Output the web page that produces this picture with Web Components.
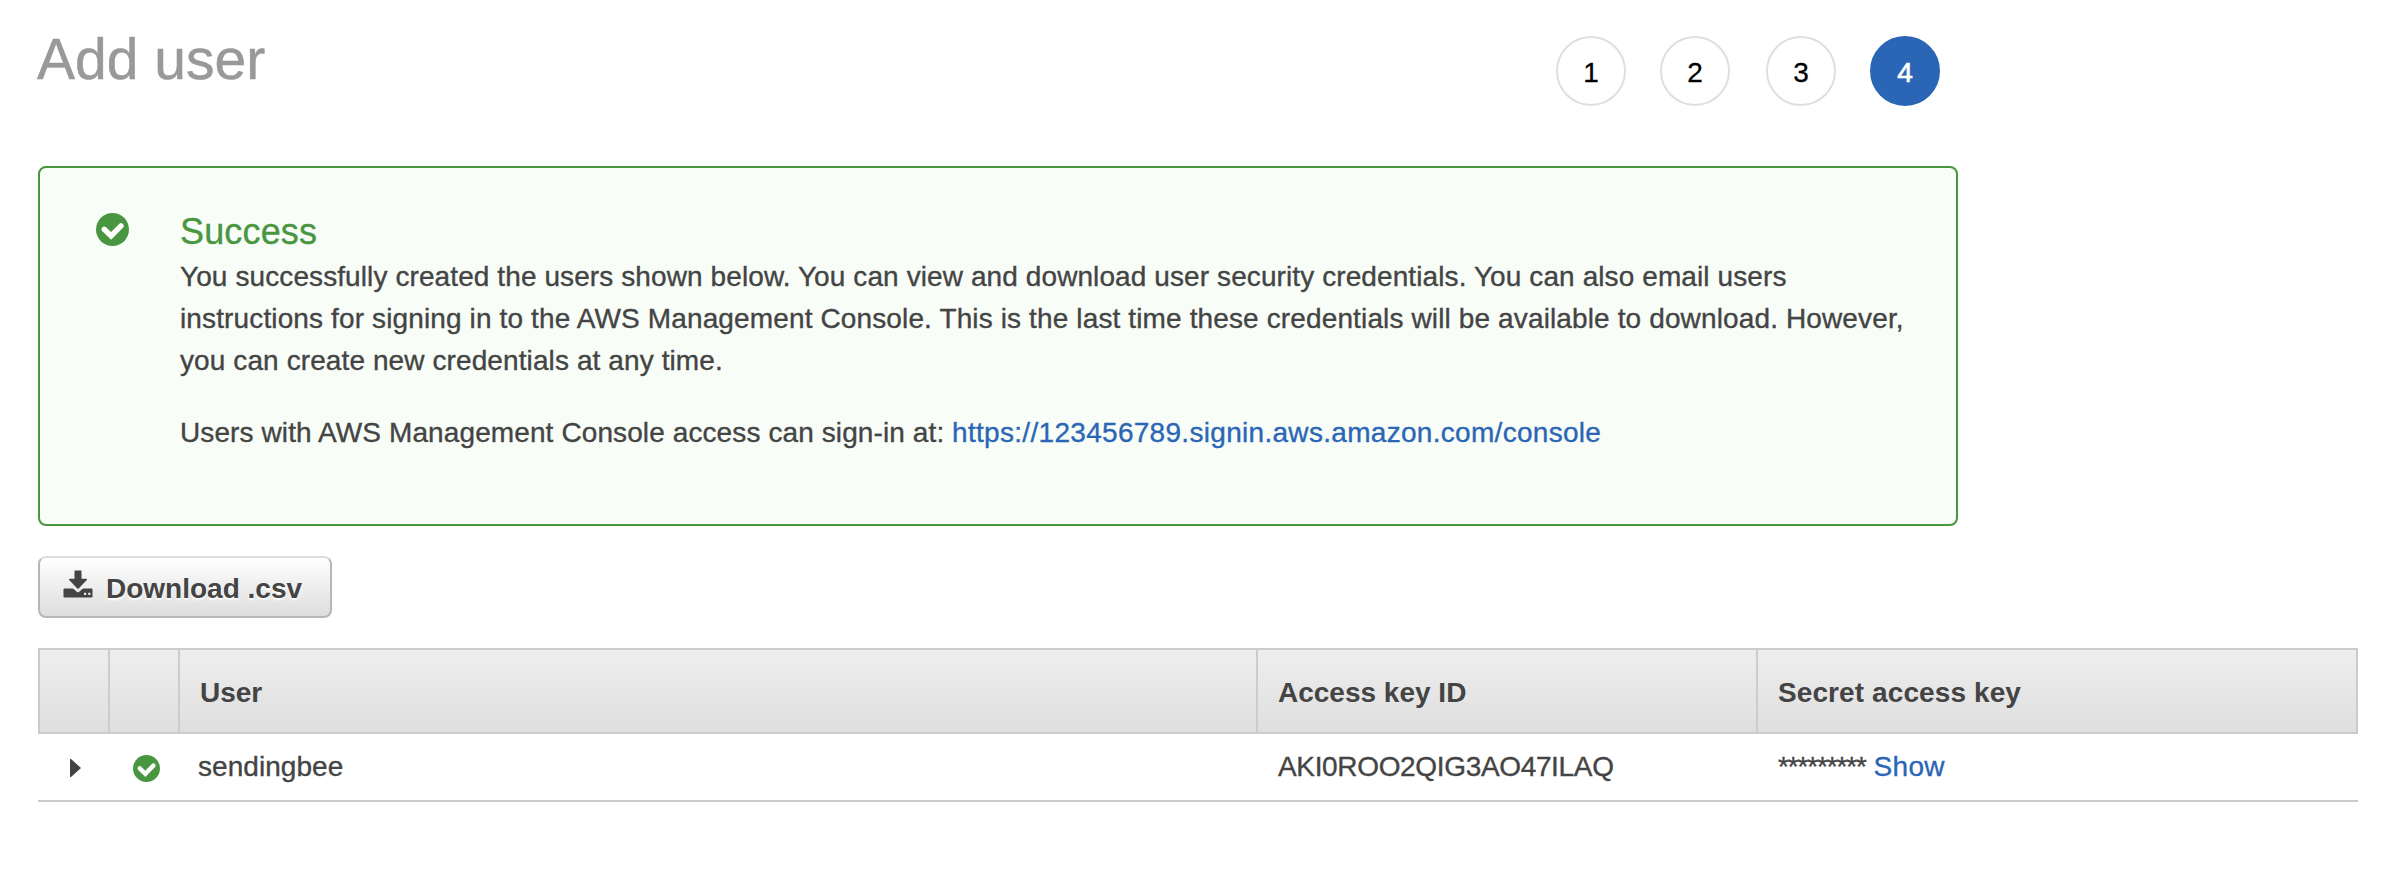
<!DOCTYPE html>
<html lang="en">
<head>
<meta charset="utf-8">
<title>Add user</title>
<style>
body { margin: 0; background: #fff; color: #444; font: 28px/42px "Liberation Sans", Arial, sans-serif; }
</style>
</head>
<body>
<add-user-page></add-user-page>
<script>
const define = (name, html) => customElements.define(name, class extends HTMLElement {
  constructor() {
    super();
    this.attachShadow({ mode: 'open' }).innerHTML = html;
  }
});

define('status-check', `
<style>
:host { display: block; width: 33px; height: 33px; }
svg { display: block; width: 100%; height: 100%; }
</style>
<svg viewBox="0 0 33 33"><circle cx="16.5" cy="16.5" r="16.5" fill="#48963f"/><path d="M8.200 16.300l6.900 6.700L25 12.900" fill="none" stroke="#fff" stroke-width="5.400" stroke-linejoin="miter" stroke-linecap="round"/></svg>`);

define('step-dot', `
<style>
:host { display: block; box-sizing: border-box; width: 70px; height: 70px; border: 2px solid #dfdfdf; border-radius: 50%; text-align: center; line-height: 69px; color: #000; -webkit-text-stroke: .3px currentColor; }
:host([current]) { background: #2a66b5; border-color: #2a66b5; color: #fff; -webkit-text-stroke-width: .7px; }
</style>
<slot></slot>`);

define('page-header', `
<style>
:host { display: flex; justify-content: space-between; align-items: flex-start; box-sizing: border-box; width: 1902px; height: 106px; padding-top: 36px; }
h1 { margin: -9px 0 0 -1px; font-size: 57px; line-height: 64px; font-weight: 400; color: #999; white-space: nowrap; -webkit-text-stroke: .5px #999; }
nav { display: grid; grid-template-columns: 104px 106px 104px 70px; }
</style>
<h1><slot></slot></h1>
<nav><step-dot>1</step-dot><step-dot>2</step-dot><step-dot>3</step-dot><step-dot current>4</step-dot></nav>`);

define('success-alert', `
<style>
:host { display: flex; box-sizing: border-box; width: 1920px; height: 360px; margin-top: 60px; padding: 45px 0 0 55.500px; border: 2px solid #48963f; border-radius: 8px; background: #f8fdf8; -webkit-text-stroke: .35px currentColor; }
status-check { flex: none; margin: 0 51.500px 0 0; }
h2 { margin: -3px 0 2px; font-size: 36px; line-height: 44px; font-weight: 400; color: #48963f; letter-spacing: .15px; -webkit-text-stroke: .35px #48963f; }
</style>
<status-check></status-check>
<div><h2>Success</h2><slot></slot></div>`);

define('text-lines', `
<style>
:host { display: block; white-space: nowrap; margin-bottom: 30px; }
</style>
<slot></slot>`);

define('download-button', `
<style>
:host { display: flex; box-sizing: border-box; width: 294px; height: 62px; margin-top: 30px; padding: 0 0 0 23px; border: 2px solid #b7b7b7; border-top-color: #ddd; border-radius: 8px; background: linear-gradient(#fff, #ddd); font-weight: 700; line-height: 61px; white-space: nowrap; text-shadow: 0 2px 2px #fff; }
svg { flex: none; width: 30px; height: 28px; margin: 12px 13px 0 0; }
</style>
<svg viewBox="0 0 30 28"><path fill="#444" fill-rule="evenodd" d="M1.5 18.5H10l3.8 3.2q1.2 1 2.4 0l3.8-3.2h8.5q1 0 1 1v7q0 1-1 1h-27q-1 0-1-1v-7q0-1 1-1zM21 22.7v2.3h2.2v-2.3zm4.2 0v2.3h2.2v-2.3z"/><path fill="#444" d="M11.5.5h7v8.2h5q1 .2.3 1.2L15.7 18.4q-.7.6-1.4 0L6.2 9.9q-.7-1 .3-1.2h5z"/></svg>
<slot></slot>`);

define('user-table', `
<style>
:host { display: block; width: 2320px; margin-top: 30px; white-space: nowrap; }
.row { display: grid; grid-template-columns: 70px 70px 1078px 500px 1fr; box-sizing: border-box; }
.head { height: 86px; border: 2px solid #ccc; background: linear-gradient(#eee, #dfdfdf); font-weight: 700; line-height: 85px; grid-template-rows: 82px; }
.head > div { border-right: 2px solid #ccc; padding-left: 20px; }
.head > div:last-child { border: 0; letter-spacing: .1px; }
.body { height: 68px; border-bottom: 2px solid #ccc; line-height: 65px; grid-template-rows: 66px; padding-left: 2px; -webkit-text-stroke: .35px currentColor; }
.body > div { padding-left: 20px; }
.body > .arrow { padding: 25px 0 0 30px; }
.body > .state { padding: 20.500px 0 0 22.500px; }
.body > .name { padding-left: 18px; letter-spacing: .05px; }
.key { letter-spacing: -.34px; }
.mask { letter-spacing: -1.15px; }
.arrow svg { display: block; }
status-check { width: 27px; height: 27px; }
a { color: #2a66b5; letter-spacing: .35px; }
</style>
<div class="row head"><div></div><div></div><div>User</div><div>Access key ID</div><div>Secret access key</div></div>
<div class="row body"><div class="arrow"><svg width="11" height="18"><path d="M0 0h1l10 9-10 9H0z" fill="#444"/></svg></div><div class="state"><status-check></status-check></div><div class="name">sendingbee</div><div class="key">AKI0ROO2QIG3AO47ILAQ</div><div><span class="mask">*********</span> <a>Show</a></div></div>`);

define('add-user-page', `
<style>
:host { display: block; box-sizing: border-box; width: 2400px; height: 870px; padding-left: 38px; overflow: hidden; }
.l { display: block; }
a { color: #2a66b5; letter-spacing: .3px; }
</style>
<page-header>Add user</page-header>
<success-alert>
<text-lines><span class="l" style="letter-spacing:.097px">You successfully created the users shown below. You can view and download user security credentials. You can also email users</span><span class="l" style="letter-spacing:.13px">instructions for signing in to the AWS Management Console. This is the last time these credentials will be available to download. However,</span><span class="l" style="letter-spacing:.1px">you can create new credentials at any time.</span></text-lines>
<text-lines><span style="letter-spacing:.105px">Users with AWS Management Console access can sign-in at:</span> <a>https://123456789.signin.aws.amazon.com/console</a></text-lines>
</success-alert>
<download-button>Download .csv</download-button>
<user-table></user-table>`);
</script>
</body>
</html>
